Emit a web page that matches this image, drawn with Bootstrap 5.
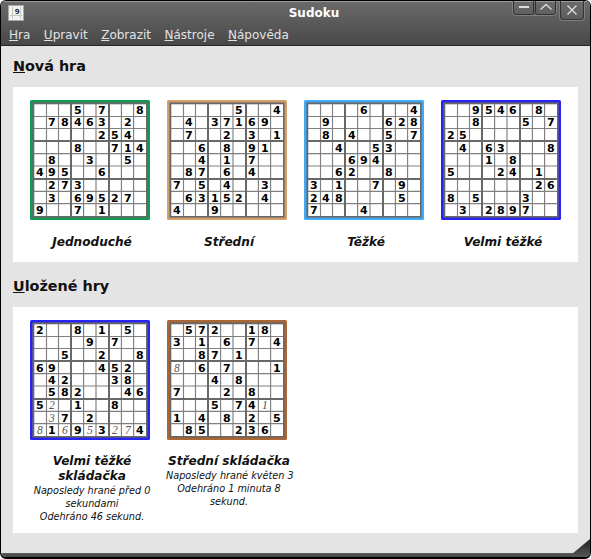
<!DOCTYPE html>
<html lang="cs">
<head>
<meta charset="utf-8">
<meta name="viewport" content="width=device-width, initial-scale=1">
<title>Sudoku</title>
<link href="https://cdn.jsdelivr.net/npm/bootstrap@5.3.0/dist/css/bootstrap.min.css" rel="stylesheet">
<style>
body{background:#fff;font-family:"DejaVu Sans",sans-serif;font-size:12px;color:#111}
.app-window{width:591px;height:559px;background:#e4e4e4;border:1px solid #000;border-bottom-width:2px;border-radius:6px}
.app-header{height:45px;background:linear-gradient(#6a6a6a,#484848);border-top:1px solid #9a9a9a;border-bottom:1px solid #262626}
.title-row{height:23px}
.title-text{font-weight:700;line-height:23px;padding-left:37px}
.app-icon{left:7px;top:3px}
.win-buttons{right:5px;top:-2px}
.menu-row{padding-left:8px;gap:13.5px;line-height:21px;color:#e2e2e2}
.menu-row a{color:inherit}
.section-title{font-size:14.35px;font-weight:700;line-height:20px;margin:0;height:41px;padding-top:10px}
.section-title.second{height:45px;padding-top:14px}
.puzzles{background:#fff;padding:13px 0 0 12px;gap:7px}
.puzzles.fresh{height:175px}
.puzzles.saved{height:226px}
.puzzle{width:130px}
.puzzle svg{display:block;margin:0 auto 14px}
.level,.details{padding-left:4px;white-space:nowrap;font-style:italic}
.level{font-size:12.1px;font-weight:700;line-height:15px}
.fresh .level{padding-top:1px}
.details{font-size:9.7px;line-height:13px}
.given{font:700 11px "DejaVu Sans",sans-serif;fill:#000}
.played{font:italic 11.5px "Liberation Serif",serif;fill:#555}
.app-footer{height:4px;background:linear-gradient(#5c5c5c,#444)}
.grip{right:0;bottom:0}
</style>
</head>
<body>
<div class="app-window position-relative d-flex flex-column overflow-hidden">
  <header class="app-header flex-shrink-0">
    <div class="title-row position-relative text-center text-white">
      <svg class="app-icon position-absolute" width="17" height="16" viewBox="0 0 17 16">
        <rect x=".5" y=".5" width="15" height="15" fill="#f2f2ee" stroke="#a8a8a0"/>
        <path d="M4.500 2v12M12.500 2v12M2 10.500h12" stroke="#c8c8c3" fill="none"/>
        <text x="9.200" y="9" text-anchor="middle" font-size="7" font-weight="700" fill="#333">9</text>
      </svg>
      <div class="title-text">Sudoku</div>
      <svg class="win-buttons position-absolute" width="73" height="21" viewBox="0 0 73 21" fill="none">
        <path d="M.5 0V12.5Q.5 15.5 3.5 15.5H41.5Q44.5 15.5 44.5 12.5V0M47.5 0V17.5Q47.5 20.5 50.5 20.5H69.5Q72.5 20.5 72.5 17.5V0" stroke="#808080"/>
        <path d="M1.5 0V12Q1.5 14.5 4 14.5H20Q21.500 14.5 21.500 12V0M23.500 0V12Q23.500 14.500 26 14.500H41Q43.500 14.500 43.500 12V0M48.500 0V17Q48.500 19.500 51 19.500H69Q71.500 19.500 71.500 17V0" stroke="#333"/>
        <path d="M7 7H17" stroke="#ddd" stroke-width="2"/>
        <path d="M28.500 9.500L34 4.500L39.500 9.500M55.500 5.500L64.500 14.500M64.500 5.500L55.500 14.500" stroke="#ddd" stroke-width="1.400"/>
      </svg>
    </div>
    <nav class="menu-row d-flex">
      <a class="text-decoration-none"><u>H</u>ra</a>
      <a class="text-decoration-none"><u>U</u>pravit</a>
      <a class="text-decoration-none"><u>Z</u>obrazit</a>
      <a class="text-decoration-none"><u>N</u>ástroje</a>
      <a class="text-decoration-none"><u>N</u>ápověda</a>
    </nav>
  </header>
  <main class="flex-grow-1 px-2 mx-1">
    <h2 class="section-title"><u>N</u>ová hra</h2>
    <div class="puzzles fresh d-flex text-center">
      <div class="puzzle"><svg data-frame="#129a54" data-rows="...5.7..8 .78463.2. .....254. ...8..714 .8..3..5. 495..6... .273..... .3.69527. 9..7.1..."></svg><div class="level">Jednoduché</div></div>
      <div class="puzzle"><svg data-frame="#d3a06c" data-rows=".....5..4 .4.37169. .7..2.3.1 ..6.8.91. ..4.1.7.. .87.6.4.. 7.5.4..3. .63152.4. 4..9....."></svg><div class="level">Střední</div></div>
      <div class="puzzle"><svg data-frame="#40aaf8" data-rows="....6...4 .9....628 .8.4..5.7 ..4..53.. ...694... ..62..8.. 3.1..7.9. 248....5. 7...4...."></svg><div class="level">Těžké</div></div>
      <div class="puzzle"><svg data-frame="#2724f2" data-rows="..9546.8. ..8...5.7 25....... .4.63...8 ...1.8... 5...24.1. .......26 8.5...3.. .3.2897.."></svg><div class="level">Velmi těžké</div></div>
    </div>
    <h2 class="section-title second"><u>U</u>ložené hry</h2>
    <div class="puzzles saved d-flex text-center">
      <div class="puzzle"><svg data-frame="#2724f2" data-rows="2..8.1.5. ....9.7.. ..5..2..8 69...452. .42...38. .582...46 5b.1..8.. .c7.2.... h1f9e3bg4"></svg><div class="level">Velmi těžké<br>skládačka</div><div class="details">Naposledy hrané před 0<br>sekundami<br>Odehráno 46 sekund.</div></div>
      <div class="puzzle"><svg data-frame="#ab6634" data-rows=".572..18. 3.1.6.7.4 ..87.1... h.6.7...1 ...4.8... 7...2.8.. ...5.74a. 1.4.8.2.5 .85..236."></svg><div class="level">Střední skládačka</div><div class="details">Naposledy hrané květen 3<br>Odehráno 1 minuta 8<br>sekund.</div></div>
    </div>
  </main>
  <div class="app-footer flex-shrink-0"></div>
  <svg class="grip position-absolute" width="18" height="18" viewBox="0 0 18 18"><defs><linearGradient id="gripFill" x2="0" y2="1"><stop stop-color="#222"/><stop offset="1" stop-color="#555"/></linearGradient></defs><path d="M18 0V18H0V15Z" fill="url(#gripFill)"/></svg>
</div>
<script src="https://cdn.jsdelivr.net/npm/bootstrap@5.3.0/dist/js/bootstrap.bundle.min.js"></script>
<script>
// Digits 1-9 are givens; letters a-i are the player's own 1-9.
const mids = [9.8, 21.8, 34.8, 47.8, 59.8, 71.8, 84.8, 97.8, 109.8];
const bases = [14, 26, 39, 52, 64, 76, 89, 102, 114];
const thin = [16.5, 28.5, 53.6, 66, 91.4, 103.6].map(p => `M${p} 4V116M4 ${p}H116`).join('');
const thick = [41, 79].map(p => `M${p} 4V116M4 ${p}H116`).join('');
document.querySelectorAll('svg[data-rows]').forEach(svg => {
  svg.setAttribute('width', 120);
  svg.setAttribute('height', 120);
  let out = `<rect width="120" height="120" rx="1.5" fill="${svg.dataset.frame}"/><rect x="2.4" y="2.4" width="115.2" height="115.2" fill="#686868"/><rect x="4.3" y="4.3" width="111.7" height="111.7" fill="#fff"/><path d="${thin}" stroke="#808080" stroke-width="1.15"/><path d="${thick}" stroke="#686868" stroke-width="2"/>`;
  svg.dataset.rows.split(' ').forEach((row, r) => [...row].forEach((c, k) => {
    if (c === '.') return;
    const own = c > '9';
    out += `<text class="${own ? 'played' : 'given'}" x="${mids[k]}" y="${bases[r]}" text-anchor="middle">${own ? c.charCodeAt(0) - 96 : c}</text>`;
  }));
  svg.innerHTML = out;
});
</script>
</body>
</html>
